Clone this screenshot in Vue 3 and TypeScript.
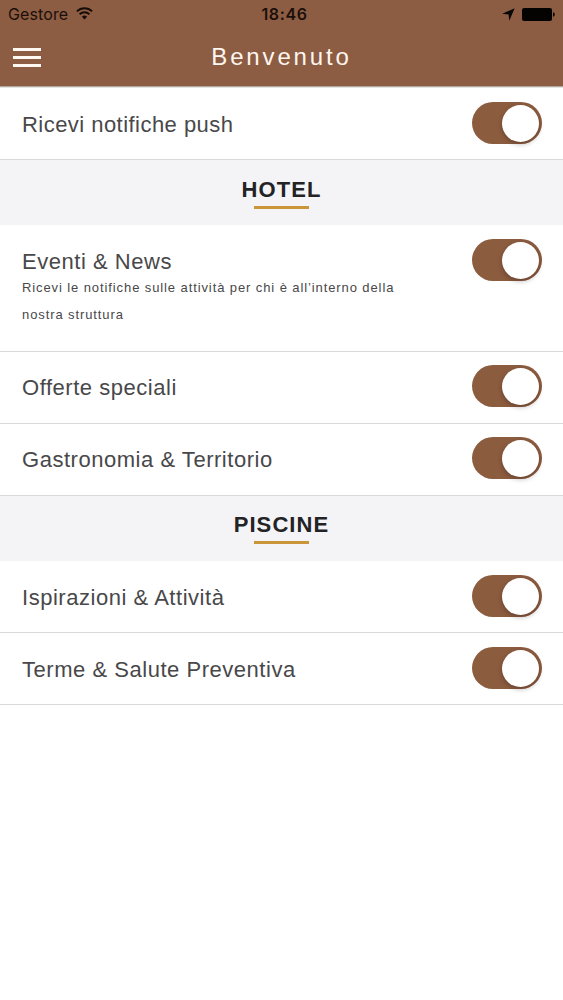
<script setup lang="ts">
import { ref } from 'vue'

interface Option {
  label: string
  note?: string
  on: boolean
}
interface Group {
  title?: string
  options: Option[]
}

const groups = ref<Group[]>([
  { options: [{ label: 'Ricevi notifiche push', on: true }] },
  {
    title: 'HOTEL',
    options: [
      {
        label: 'Eventi & News',
        note: 'Ricevi le notifiche sulle attività per chi è all’interno della nostra struttura',
        on: true,
      },
      { label: 'Offerte speciali', on: true },
      { label: 'Gastronomia & Territorio', on: true },
    ],
  },
  {
    title: 'PISCINE',
    options: [
      { label: 'Ispirazioni & Attività', on: true },
      { label: 'Terme & Salute Preventiva', on: true },
    ],
  },
])
</script>

<template>
  <div class="screen">
    <header class="header">
      <div class="status">
        <div class="carrier">
          <span>Gestore</span>
          <svg class="wifi" width="17" height="13" viewBox="0 0 17 13" fill="none" stroke="#160c08" stroke-width="1.9">
            <path d="M.9 4.4a10.8 10.8 0 0 1 15.2 0" />
            <path d="M3.6 7.2a7 7 0 0 1 9.8 0" />
            <path d="M8.5 12.4 5.9 9.7a3.8 3.8 0 0 1 5.2 0Z" fill="#160c08" stroke="none" />
          </svg>
        </div>
        <div class="clock">18:46</div>
        <div class="indicators">
          <svg width="13" height="13" viewBox="0 0 12 12"><path d="M11.7.3 6.7 11.8 6.1 6.1.2 5.3Z" fill="#0b0705" /></svg>
          <svg width="33" height="13" viewBox="0 0 33 13" fill="#050302">
            <rect width="30" height="13" rx="2" />
            <path d="M31 4.2q1.8.5 1.8 2.3T31 8.8Z" />
          </svg>
        </div>
      </div>
      <div class="navbar">
        <button class="menu" aria-label="Menu"><i /><i /><i /></button>
        <h1>Benvenuto</h1>
      </div>
    </header>
    <main>
      <section v-for="(group, g) in groups" :key="g">
        <div v-if="group.title" class="heading">
          <h2>{{ group.title }}</h2>
        </div>
        <div v-for="option in group.options" :key="option.label" class="row" :class="{ tall: option.note }">
          <div class="copy">
            <div class="label">{{ option.label }}</div>
            <p v-if="option.note">{{ option.note }}</p>
          </div>
          <button class="toggle" :class="{ on: option.on }" role="switch" :aria-checked="option.on" :aria-label="option.label" @click="option.on = !option.on">
            <span class="knob" />
          </button>
        </div>
      </section>
    </main>
  </div>
</template>

<style>
body {
  margin: 0;
  background: #fff;
}
</style>

<style scoped>
.screen {
  width: 563px;
  height: 1000px;
  overflow: hidden;
  background: #fff;
  color: #48484a;
  font-family: "Liberation Sans", Arial, sans-serif;
}
.header {
  box-sizing: border-box;
  height: 87px;
  margin-bottom: 1px;
  background: #8c5d43;
  border-bottom: 1px solid #aea5a0;
  box-shadow: 0 1px #e6e3e1;
}
.status {
  display: grid;
  grid-template-columns: 1fr auto 1fr;
  align-items: center;
  height: 28px;
  padding: 0 8px;
  color: #1c0f0a;
  font-family: Inter, sans-serif;
  font-size: 16px;
}
.carrier {
  display: flex;
  align-items: center;
  gap: 8px;
  letter-spacing: 0.1px;
}
.wifi {
  margin-top: -1px;
}
.clock {
  font-weight: 600;
  letter-spacing: 0.6px;
  margin-left: 6px;
}
.indicators {
  display: flex;
  justify-content: flex-end;
  align-items: center;
  gap: 7px;
}
.navbar {
  display: grid;
  grid-template-columns: 28px 1fr 28px;
  align-items: center;
  height: 58px;
  padding: 0 13px;
}
.menu {
  display: flex;
  flex-direction: column;
  gap: 5px;
  padding: 0;
  margin-top: 1px;
  border: 0;
  background: none;
}
.menu i {
  width: 28px;
  height: 3px;
  background: #fff8f2;
}
h1 {
  margin: 0;
  color: #fff6ef;
  font-size: 24px;
  font-weight: 400;
  line-height: 28px;
  letter-spacing: 2.85px;
  text-align: center;
}
.heading {
  display: flex;
  flex-direction: column;
  align-items: center;
  box-sizing: border-box;
  height: 65px;
  padding-top: 16px;
  background: #f4f4f6;
}
section:last-child .heading {
  padding-top: 15px;
}
h2 {
  margin: 0;
  color: #232326;
  font-size: 22px;
  line-height: 28px;
  letter-spacing: 1.1px;
}
.heading::after {
  content: "";
  width: 55px;
  height: 3px;
  margin-top: 2px;
  background: #cb9539;
}
.row {
  display: flex;
  justify-content: space-between;
  align-items: flex-start;
  box-sizing: border-box;
  height: 72px;
  padding: 14px 21.5px 0 22px;
  border-bottom: 1px solid #d9d9dc;
}
.row.tall {
  height: 127px;
}
.row.tall ~ .row {
  padding-top: 13px;
}
.copy {
  width: 400px;
  padding-top: 9px;
}
.label {
  font-size: 22px;
  line-height: 28px;
  letter-spacing: 0.53px;
  white-space: nowrap;
}
section:first-child .label {
  letter-spacing: 0.46px;
}
p {
  margin: -2px 0 0;
  font-size: 13px;
  line-height: 27px;
  letter-spacing: 0.9px;
}
.toggle {
  display: flex;
  align-items: center;
  flex: none;
  box-sizing: border-box;
  width: 69.5px;
  height: 42px;
  padding: 0 2.5px;
  border: 0;
  border-radius: 21px;
  background: #d9d9dc;
}
.toggle.on {
  justify-content: flex-end;
  background: #8c5c3f;
}
.knob {
  width: 37px;
  height: 37px;
  border-radius: 50%;
  background: #fff;
  box-shadow: 0 2px 5px rgba(40, 20, 20, 0.35);
}
</style>
